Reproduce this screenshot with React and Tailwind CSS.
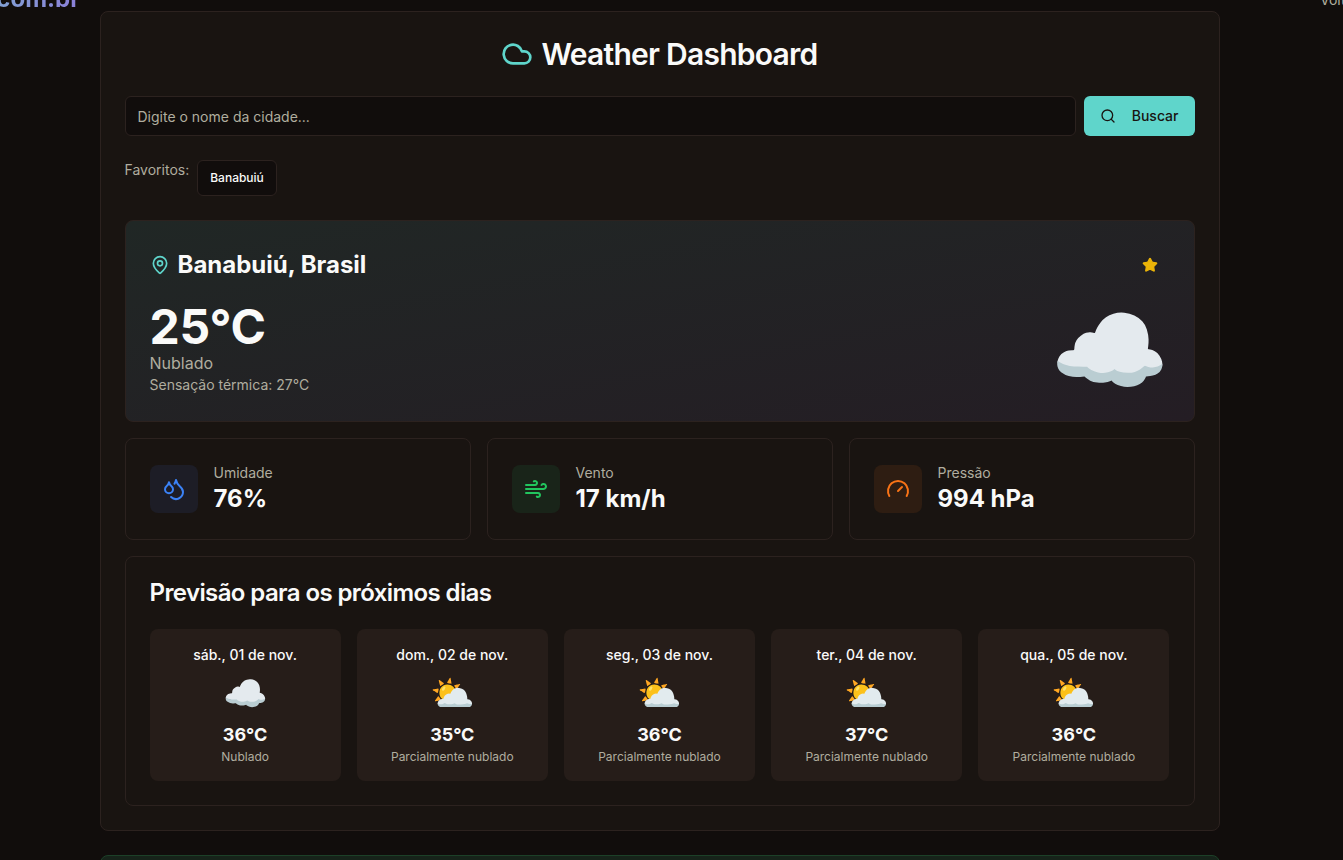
import { Cloud, Search, MapPin, Star, Droplets, Wind, Gauge } from "lucide-react";

const days = [
  ["sáb., 01 de nov.", "☁️", "36°C", "Nublado"],
  ["dom., 02 de nov.", "⛅", "35°C", "Parcialmente nublado"],
  ["seg., 03 de nov.", "⛅", "36°C", "Parcialmente nublado"],
  ["ter., 04 de nov.", "⛅", "37°C", "Parcialmente nublado"],
  ["qua., 05 de nov.", "⛅", "36°C", "Parcialmente nublado"],
];

const metrics = [
  { label: "Umidade", value: "76%", Icon: Droplets, box: "bg-[#1d1d26]", color: "text-[#3b82f6]" },
  { label: "Vento", value: "17 km/h", Icon: Wind, box: "bg-[#192419]", color: "text-[#22c55e]" },
  { label: "Pressão", value: "994 hPa", Icon: Gauge, box: "bg-[#2e1d12]", color: "text-[#f97316]" },
];

export default function App() {
  return (
    <div className="relative h-[860px] overflow-hidden bg-[#110d0c] font-[Inter,sans-serif] text-[#fafaf9]">
      <header className="absolute inset-x-0 top-[-17px] flex h-8 items-center justify-between">
        <span className="ml-[-144px] w-[224px] bg-gradient-to-r from-[#5fd5cb] to-[#8b7fd8] bg-clip-text text-right text-2xl font-bold text-transparent">com.br</span>
        <span className="w-[23px] pt-0.5 text-sm whitespace-nowrap text-[#b0ad9f]">Voltar</span>
      </header>
      <main className="ml-[99.5px] flex w-[1120px] flex-col gap-6 pt-[11px]">
        <section className="rounded-lg border border-[#2c221f] bg-[#191411] p-6">
          <h1 className="flex items-center justify-center gap-2 text-3xl font-semibold tracking-tight">
            <Cloud className="size-8 text-[#5fd5cb]" />
            Weather Dashboard
          </h1>
          <div className="mt-6 flex gap-2">
            <input className="h-10 flex-1 rounded-md border border-[#2c221f] bg-[#110d0c] px-3 text-sm placeholder:text-[#b0ad9f]" placeholder="Digite o nome da cidade..." />
            <button className="flex h-10 items-center gap-4 rounded-md bg-[#5fd5cb] px-4 text-sm font-medium text-[#191411]">
              <Search className="size-4" />
              Buscar
            </button>
          </div>
          <div className="mt-6 flex gap-2">
            <span className="text-sm text-[#b0ad9f]">Favoritos:</span>
            <button className="h-9 rounded-md border border-[#2c221f] bg-[#110d0c] px-3 text-xs font-medium">Banabuiú</button>
          </div>
          <div className="mt-6 flex flex-col gap-4">
            <div className="rounded-lg border border-[#2c221f] bg-gradient-to-br from-[#202725] to-[#241d24] p-6">
              <div className="mb-4 flex h-10 items-center justify-between">
                <h2 className="flex items-center gap-2 text-2xl font-bold">
                  <MapPin className="size-5 text-[#5fd5cb]" />
                  Banabuiú, Brasil
                </h2>
                <button className="flex size-10 items-center justify-center">
                  <Star className="size-4 fill-[#eab308] text-[#eab308]" />
                </button>
              </div>
              <div className="flex items-center justify-between">
                <div>
                  <p className="text-5xl font-bold tracking-[-0.3px]">25°C</p>
                  <p className="text-base text-[#b0ad9f]">Nublado</p>
                  <p className="text-sm text-[#b0ad9f]">Sensação térmica: 27°C</p>
                </div>
                <div className="text-8xl">☁️</div>
              </div>
            </div>
            <div className="grid grid-cols-3 gap-4">
              {metrics.map(({ label, value, Icon, box, color }) => (
                <div key={label} className="flex items-center gap-4 rounded-lg border border-[#2c221f] p-6">
                  <div className={`rounded-lg p-3 ${box}`}>
                    <Icon className={`size-6 ${color}`} />
                  </div>
                  <div>
                    <p className="text-sm text-[#b0ad9f]">{label}</p>
                    <p className="text-2xl font-bold">{value}</p>
                  </div>
                </div>
              ))}
            </div>
            <div className="rounded-lg border border-[#2c221f] p-6">
              <h2 className="text-2xl leading-none font-semibold tracking-tight">Previsão para os próximos dias</h2>
              <div className="mt-6 grid grid-cols-5 gap-4">
                {days.map(([day, icon, temp, text]) => (
                  <div key={day} className="rounded-lg bg-[#261d19] p-4 text-center">
                    <p className="text-sm font-medium">{day}</p>
                    <div className="my-2 text-4xl">{icon}</div>
                    <p className="text-lg font-bold">{temp}</p>
                    <p className="text-xs text-[#b0ad9f]">{text}</p>
                  </div>
                ))}
              </div>
            </div>
          </div>
        </section>
        <section className="h-16 rounded-lg border border-[#1c4028] bg-[#16231a]" />
      </main>
    </div>
  );
}
